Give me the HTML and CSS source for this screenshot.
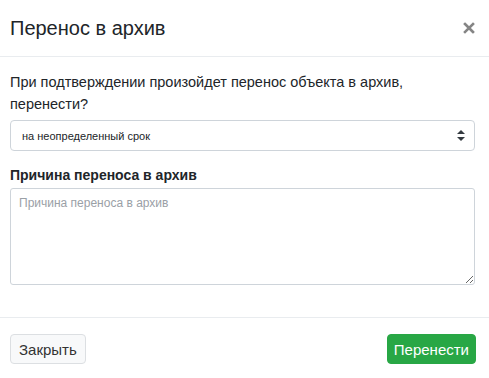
FILE: index.html
```html
<!doctype html>
<html>

<head>
    <title>Перенос в архив</title>
    <link rel="stylesheet" href="styles.css">
</head>

<body>
    <div class="modal">
        <div class="modal-header">
            <h5 class="modal-title">Перенос в архив</h5>
            <button class="close" type="button" aria-label="Закрыть">
                <svg width="12" height="12" viewBox="0 0 12 12">
                    <path d="M2 2L10 10M10 2L2 10" stroke="#858585" stroke-width="2.6" stroke-linecap="square" />
                </svg>
            </button>
        </div>
        <div class="modal-body">
            <p class="question">При подтверждении произойдет перенос объекта в архив, перенести?</p>
            <div class="select-wrap">
                <select class="custom-select" name="term">
                    <option>на неопределенный срок</option>
                </select>
                <svg class="select-arrows" width="8" height="11" viewBox="0 0 8 11">
                    <path d="M4 0L8 4H0Z M4 11L0 7H8Z" fill="#343a40" />
                </svg>
            </div>
            <label class="field-label" for="reason">Причина переноса в архив</label>
            <textarea id="reason" class="form-control" placeholder="Причина переноса в архив"></textarea>
        </div>
        <div class="modal-footer">
            <button class="btn btn-light" type="button">Закрыть</button>
            <button class="btn btn-success" type="button">Перенести</button>
        </div>
    </div>
</body>

</html>
```

FILE: styles.css
```css
body {
    margin: 0;
    font-family: "Liberation Sans", Arial, sans-serif;
    color: #212529;
    background: #fff;
}

.modal {
    width: 489px;
}

.modal-header {
    display: flex;
    align-items: center;
    justify-content: space-between;
    height: 57px;
    padding: 0 14px 0 10px;
    border-bottom: 1px solid #e9ecef;
    box-sizing: border-box;
}

.modal-title {
    margin: 0;
    font-size: 20px;
    font-weight: normal;
    line-height: 24px;
}

.close {
    display: flex;
    padding: 0;
    border: none;
    background: none;
    cursor: pointer;
}

.modal-body {
    padding: 14px 14px 32px 10px;
}

.question {
    margin: 0 0 5px;
    font-size: 14.5px;
    line-height: 22px;
}

.select-wrap {
    position: relative;
}

.custom-select {
    display: block;
    width: 100%;
    height: 31px;
    padding: 0 30px 0 11px;
    font-family: inherit;
    font-size: 11px;
    color: #212529;
    background: #fff;
    border: 1px solid #ced4da;
    border-radius: 4px;
    appearance: none;
    -webkit-appearance: none;
    box-sizing: border-box;
}

.select-arrows {
    position: absolute;
    right: 10px;
    top: 10px;
    pointer-events: none;
}

.field-label {
    display: block;
    margin: 15px 0 4px;
    font-size: 14px;
    font-weight: bold;
    line-height: 18px;
}

.form-control {
    display: block;
    width: 100%;
    height: 97px;
    padding: 7px 8px;
    font-family: inherit;
    font-size: 12px;
    color: #212529;
    border: 1px solid #ced4da;
    border-radius: 3px;
    box-sizing: border-box;
}

.form-control::placeholder {
    color: #9aa0a6;
}

.modal-footer {
    display: flex;
    justify-content: space-between;
    padding: 16px 13px 14px 10px;
    border-top: 1px solid #e9ecef;
}

.btn {
    height: 30px;
    padding: 0 8px;
    font-family: inherit;
    font-size: 15px;
    border-radius: 4px;
    cursor: pointer;
}

.btn-light {
    color: #333;
    background-color: #f8f9fa;
    border: 1px solid #dcdfe2;
}

.btn-success {
    padding: 0 6px;
    color: #fff;
    background-color: #28a745;
    border: 1px solid #28a745;
}
```
